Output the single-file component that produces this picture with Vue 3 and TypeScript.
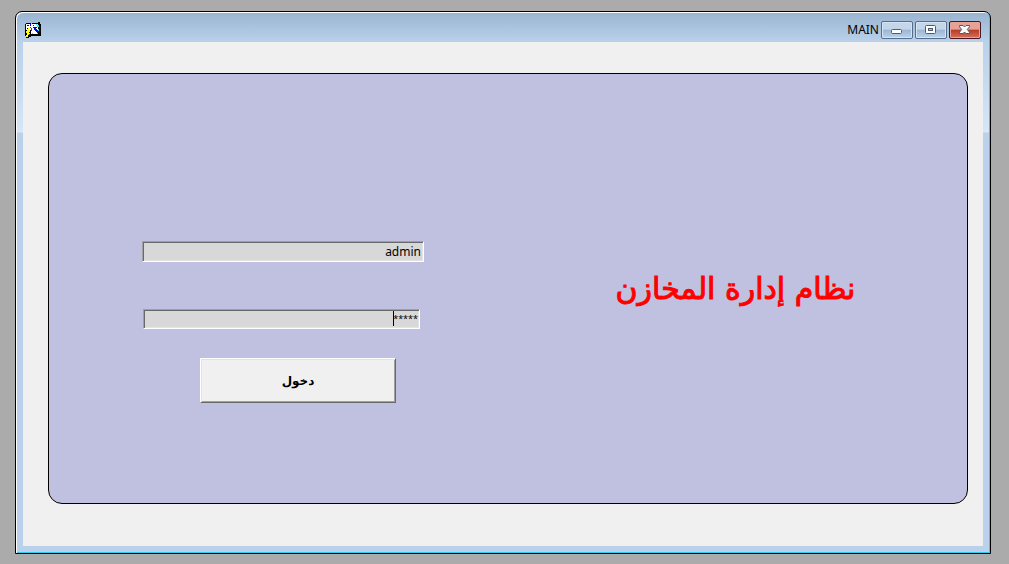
<script setup lang="ts">
import { ref } from 'vue'

const username = ref('admin')
const password = ref('*****')
</script>

<template>
  <div class="desktop">
    <section class="window" aria-label="MAIN">
      <header class="titlebar">
        <svg class="app-icon" width="16" height="16" viewBox="0 0 16 16" shape-rendering="crispEdges" aria-hidden="true">
          <path fill="#000" d="M13 0h2v2h1v12H6v1H4v1H1v-2H0V2h1V1h5v1h1V1h6z" />
          <path fill="#fff" d="M1 2h12v10H6V9H1z" />
          <path fill="#00f" d="M2 3h2v1H2zM5 2h1v2H5zM8 3h1v1H8zM8 5h4v1h-1v1h1v1h1v3h-1v-1h-1V9h-1V8H9V6H8z" />
          <path fill="#0ff" d="M11 2h1v1h-1zM12 3h2v2h-2zM13 7h1v2h-1zM7 11h1v1H7zM12 11h1v1h-1z" />
          <path fill="#f00" d="M5 5h1v1h1v3H6v1H5V9h1V6H5z" />
          <path fill="#000" d="M2 6h1v1H2zM1 8h1v2h1v2H2v2H1zM5 8h1v4H5z" />
          <path fill="#ff0" d="M3 6h1v2h1v2H4v1h1v1H4v1H3v2H1v-2h1v-2H1V9h1V7h1z" />
        </svg>
        <span class="caption">MAIN</span>
        <div class="controls">
          <button type="button" class="control" aria-label="Minimize">
            <svg width="12" height="10" viewBox="0 0 12 10"><rect x=".5" y="4.500" width="10" height="4" rx="1" fill="#fff" stroke="#535b6b" /></svg>
          </button>
          <button type="button" class="control" aria-label="Maximize">
            <svg width="12" height="10" viewBox="0 0 12 10"><rect x=".5" y=".5" width="10" height="8" rx="1" fill="#fff" stroke="#535b6b" /><rect x="3.500" y="3.500" width="4" height="2" fill="#a7c2df" stroke="#535b6b" /></svg>
          </button>
          <button type="button" class="control close" aria-label="Close">
            <svg width="12" height="10" viewBox="0 0 12 10"><path d="M.5.5H4L5.500 2 7 .5h3.500v1.300L8.300 4.500l2.200 2.700v1.300H7L5.500 7 4 8.500H.5V7.200L2.700 4.500.5 1.800z" fill="#fff" stroke="#535666" /></svg>
          </button>
        </div>
      </header>
      <main class="client">
        <div class="panel">
          <form class="login" @submit.prevent>
            <input v-model="username" class="field" type="text" aria-label="اسم المستخدم" dir="ltr" />
            <div class="secret">
              <input v-model="password" class="field" type="text" aria-label="كلمة المرور" dir="ltr" autocomplete="off" />
              <span class="caret" aria-hidden="true"></span>
            </div>
            <button class="submit" type="submit" lang="ar" dir="rtl">دخول</button>
          </form>
          <h1 class="title" lang="ar" dir="rtl">نظام إدارة المخازن</h1>
        </div>
      </main>
    </section>
  </div>
</template>

<style>
html,
body {
  background: #ababab;
}
</style>

<style scoped>
.desktop {
  box-sizing: border-box;
  display: flex;
  min-height: 100vh;
  padding: 11px 18px 10px 15px;
  background: #ababab;
  font-family: "Noto Sans", "Open Sans", "DejaVu Sans", sans-serif;
  color: #000;
}

.window {
  box-sizing: border-box;
  flex: 1;
  display: flex;
  flex-direction: column;
  padding: 0 7px 7px;
  border: 1px solid #000;
  border-radius: 7px 7px 0 0;
  background: linear-gradient(#99b4d1 0, #b9d1ea 30px, #d5e5f5 116px, #dbe9f7 120px, #b9d1ea 121px);
  box-shadow: inset 1px 1px #fff, inset -1px -1px #2bd0ee;
}

.titlebar {
  display: flex;
  align-items: center;
  height: 30px;
  padding: 8px 2px 2px;
  box-sizing: border-box;
}

.caption {
  margin-left: auto;
  margin-right: 2px;
  font-size: 12px;
  line-height: 18px;
}

.controls {
  display: flex;
  gap: 2px;
}

.control {
  display: flex;
  align-items: center;
  justify-content: center;
  width: 32px;
  height: 18px;
  padding: 0;
  border: 1px solid #576d8b;
  border-radius: 2px;
  background: linear-gradient(#c3d6ea 0 45%, #9bb6d3 50%, #b9d3ec);
  box-shadow: inset 0 0 0 1px #d5e4f3;
}

.close {
  border-color: #4c1722;
  background: linear-gradient(#e5a397 0 45%, #b93a25 50%, #d3725c);
  box-shadow: inset 0 0 0 1px #e5a498;
}

.client {
  flex: 1;
  display: flex;
  padding: 31px 15px 42px 25px;
  background: #f0f0f0;
}

.panel {
  box-sizing: border-box;
  flex: 1;
  display: grid;
  grid-template-columns: 1fr 1fr;
  align-items: center;
  border: 1px solid #000;
  border-radius: 14px;
  background: #c0c0e0;
}

.login {
  display: flex;
  flex-direction: column;
  align-items: flex-start;
  padding: 67px 0 0 93px;
}

.field {
  box-sizing: border-box;
  display: block;
  width: 282px;
  height: 21px;
  padding: 0 2px 1px;
  border: 1px solid;
  border-color: #a0a0a0 #fff #fff #a0a0a0;
  border-radius: 0;
  outline: 0;
  background: #d8d8d8;
  box-shadow: inset 1px 1px #696969, inset -1px -1px #e3e3e3;
  color: #000;
  font: 12px/18px "Noto Sans", "Open Sans", sans-serif;
  text-align: right;
}

.secret {
  position: relative;
  margin: 47px 0 0 1px;
}

.secret .field {
  width: 277px;
  height: 20px;
  padding: 0 1px 2px;
  font-size: 9px;
  line-height: 16px;
}

.caret {
  position: absolute;
  top: 2px;
  right: 26px;
  width: 1px;
  height: 15px;
  background: #000;
}

.submit {
  width: 196px;
  height: 45px;
  margin: 29px 0 0 58px;
  padding: 0;
  border: 1px solid;
  border-color: #fff #696969 #696969 #fff;
  border-radius: 0;
  background: #f0f0f0;
  box-shadow: inset 1px 1px #e3e3e3, inset -1px -1px #a0a0a0;
  color: #000;
  font: bold 12px/18px "DejaVu Sans", sans-serif;
}

.title {
  margin: 0;
  padding-right: 4px;
  color: #f00;
  font: 30px/44px "DejaVu Sans", sans-serif;
  -webkit-text-stroke: 1px #f00;
  text-align: center;
}
</style>
